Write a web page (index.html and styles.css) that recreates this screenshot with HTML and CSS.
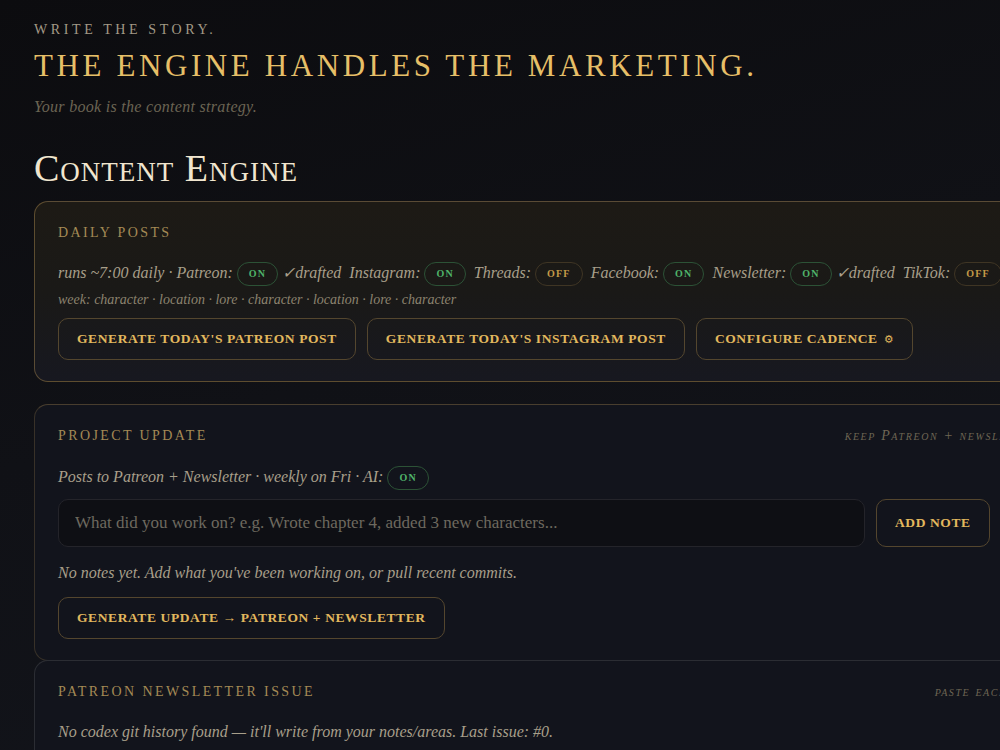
FILE: index.html
```html
<!DOCTYPE html>
<html lang="en">
<head>
    <meta charset="UTF-8">
    <meta name="viewport" content="width=device-width, initial-scale=1.0">
    <title>Content Engine</title>
    <link rel="stylesheet" href="styles.css">
</head>
<body>
    <div class="page">
        <header class="hero">
            <div class="eyebrow">Write the story.</div>
            <h1 class="tagline">The engine handles the marketing.</h1>
            <p class="subline">Your book is the content strategy.</p>
        </header>

        <h2 class="page-title">Content Engine</h2>

        <section class="card card-daily">
            <div class="card-head">
                <h3 class="card-title">Daily posts</h3>
            </div>
            <p class="status-line">
                runs ~7:00 daily · Patreon: <span class="pill pill-on">On</span> ✓drafted&nbsp;
                Instagram: <span class="pill pill-on">On</span>&nbsp;
                Threads: <span class="pill pill-off">Off</span>&nbsp;
                Facebook: <span class="pill pill-on">On</span>&nbsp;
                Newsletter: <span class="pill pill-on">On</span> ✓drafted&nbsp;
                TikTok: <span class="pill pill-off">Off</span>
            </p>
            <p class="week-line">week: character · location · lore · character · location · lore · character</p>
            <div class="actions">
                <button class="btn">Generate today's Patreon post</button>
                <button class="btn">Generate today's Instagram post</button>
                <button class="btn">Configure cadence <span class="gear">⚙</span></button>
            </div>
        </section>

        <section class="card card-update">
            <div class="card-head">
                <h3 class="card-title">Project update</h3>
                <span class="card-hint">keep Patreon + newsletter fed</span>
            </div>
            <p class="status-line">Posts to Patreon + Newsletter · weekly on Fri · AI: <span class="pill pill-on">On</span></p>
            <div class="note-row">
                <input class="note-input" type="text" placeholder="What did you work on? e.g. Wrote chapter 4, added 3 new characters...">
                <button class="btn btn-tall">Add note</button>
            </div>
            <p class="empty-line">No notes yet. Add what you've been working on, or pull recent commits.</p>
            <div class="actions">
                <button class="btn">Generate update → Patreon + Newsletter</button>
            </div>
        </section>

        <section class="card card-issue">
            <div class="card-head">
                <h3 class="card-title">Patreon newsletter issue</h3>
                <span class="card-hint">paste each issue in</span>
            </div>
            <p class="empty-line">No codex git history found — it'll write from your notes/areas. Last issue: #0.</p>
        </section>
    </div>
</body>
</html>
```

FILE: styles.css
```css
html, body {
    margin: 0;
    overflow: hidden;
}
body {
    font-family: "Liberation Serif", "Times New Roman", serif;
    background: linear-gradient(165deg, #0c0c0f 0%, #101116 45%, #13151c 100%);
    color: #a89f8a;
    min-height: 100vh;
}
.page {
    width: 1056px;
    padding: 22px 0 0 34px;
}
.hero {
    margin-bottom: 30px;
}
.eyebrow {
    text-transform: uppercase;
    font-size: 14px;
    letter-spacing: 3.6px;
    color: #a39a86;
}
.tagline {
    margin: 10px 0 0;
    text-transform: uppercase;
    font-weight: normal;
    font-size: 31px;
    letter-spacing: 3.6px;
    color: #e6bf68;
}
.subline {
    margin: 14px 0 0;
    font-style: italic;
    font-size: 16px;
    letter-spacing: 0.3px;
    color: #6b6453;
}
.page-title {
    margin: 0 0 11px;
    font-weight: normal;
    font-variant: small-caps;
    font-size: 38px;
    letter-spacing: 1px;
    color: #f1e6cf;
}
.card {
    border: 1px solid rgba(190, 155, 90, 0.22);
    border-radius: 14px;
    background: #12141c;
    padding: 23px 23px 21px;
}
.card-daily {
    border-color: rgba(200, 160, 90, 0.38);
    background: linear-gradient(180deg, #1d1a15 0%, #1a1917 50%, #171820 100%);
    margin-bottom: 22px;
}
.card-update {
    border-top-color: rgba(200, 160, 90, 0.3);
}
.card-issue {
    border-color: rgba(120, 120, 120, 0.25);
    margin-top: -1px;
}
.card-head {
    display: flex;
    justify-content: space-between;
    align-items: baseline;
    margin-bottom: 18px;
}
.card-title {
    margin: 0;
    font-weight: normal;
    text-transform: uppercase;
    font-size: 14px;
    letter-spacing: 2.4px;
    color: #a48a55;
}
.card-hint {
    font-style: italic;
    font-variant: small-caps;
    font-size: 14px;
    letter-spacing: 1.6px;
    color: #6e6654;
}
.status-line {
    margin: 0;
    font-style: italic;
    font-size: 16px;
    line-height: 28px;
    color: #a89f8a;
    white-space: nowrap;
}
.week-line {
    margin: 2px 0 7px;
    font-style: italic;
    font-size: 14px;
    line-height: 22px;
    color: #8c836f;
}
.pill {
    display: inline-block;
    font-style: normal;
    font-weight: bold;
    text-transform: uppercase;
    font-size: 10px;
    letter-spacing: 1.2px;
    padding: 5px 11px;
    line-height: 12px;
    border-radius: 12px;
    border: 1px solid;
    vertical-align: 1px;
}
.pill-on {
    color: #4fb36a;
    border-color: #2c5236;
}
.pill-off {
    color: #c49a48;
    border-color: #3f3524;
}
.actions {
    display: flex;
    gap: 11px;
}
.btn {
    font-family: "Liberation Serif", "Times New Roman", serif;
    background: transparent;
    color: #e2b85e;
    font-weight: bold;
    text-transform: uppercase;
    font-size: 13.5px;
    letter-spacing: 0.6px;
    padding: 0 18px;
    height: 42px;
    border: 1px solid #54462e;
    border-radius: 10px;
    cursor: pointer;
}
.gear {
    font-family: "DejaVu Sans", sans-serif;
    font-size: 11px;
    margin-left: 2px;
}
.card-update .card-head {
    margin-bottom: 19px;
}
.card-update .status-line {
    margin-bottom: 8px;
}
.note-row {
    display: flex;
    gap: 11px;
    margin-bottom: 14px;
}
.note-input {
    width: 807px;
    height: 48px;
    box-sizing: border-box;
    padding: 0 16px;
    background: #0e0f14;
    border: 1px solid #24242a;
    border-radius: 10px;
    font-family: "Liberation Serif", "Times New Roman", serif;
    font-size: 17px;
    color: #a89f8a;
}
.note-input::placeholder {
    color: #6d695f;
}
.btn-tall {
    height: 48px;
    padding: 0 18px;
}
.empty-line {
    margin: 0 0 12px;
    font-style: italic;
    font-size: 16px;
    line-height: 24px;
    color: #a89f8a;
}
.card-issue .card-head {
    margin-bottom: 20px;
}
.card-issue .empty-line {
    margin-top: 8px;
}
```
